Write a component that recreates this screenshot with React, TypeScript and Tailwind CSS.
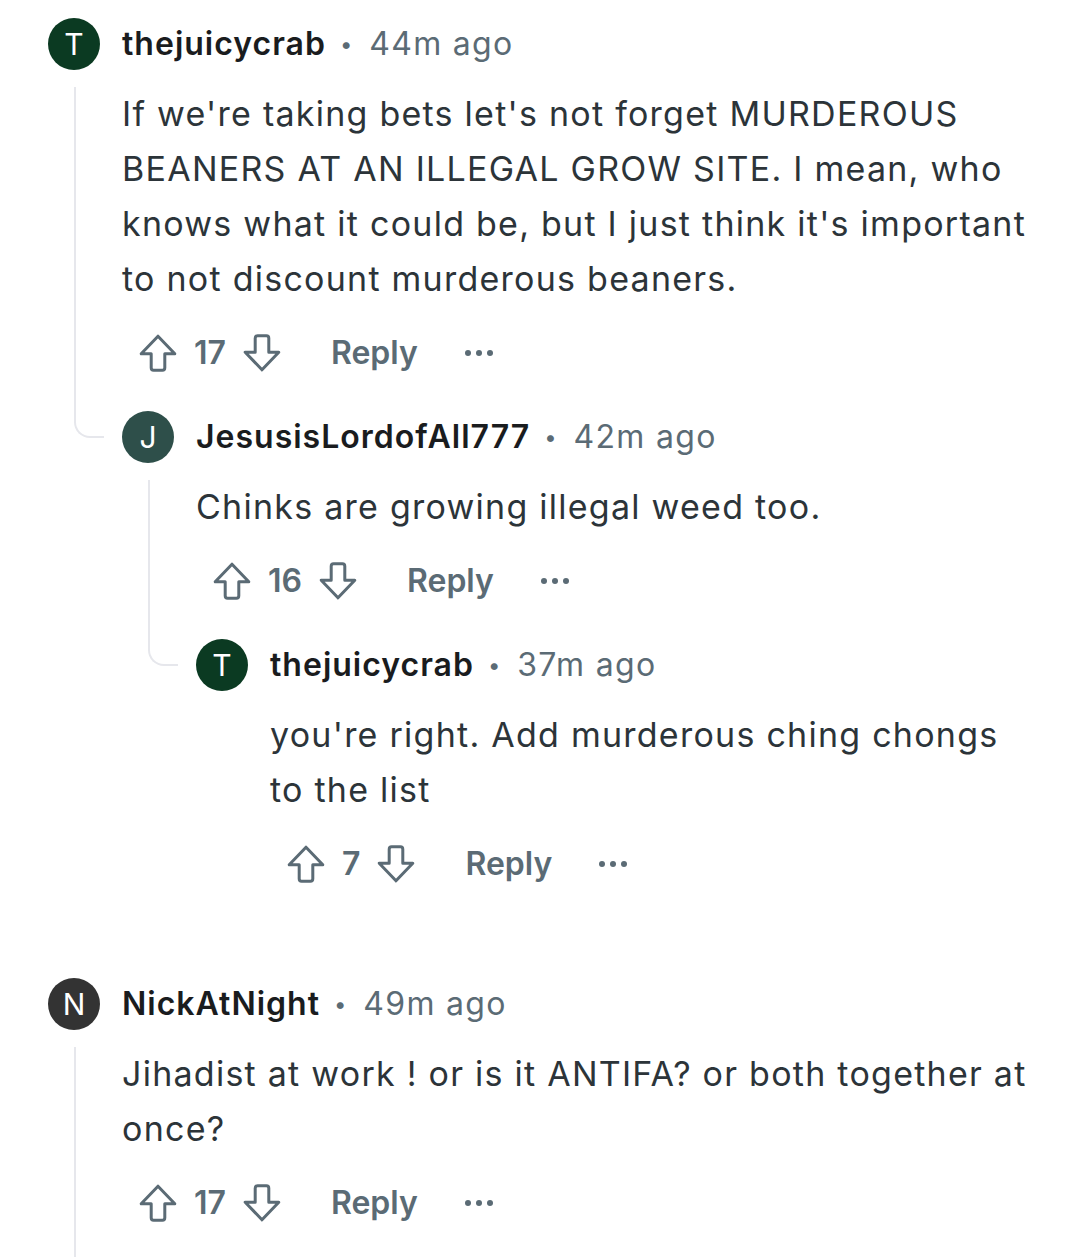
type Comment = {
  author: string;
  initial: string;
  avatar: string;
  time: string;
  body: string;
  votes: number;
  children?: Comment[];
  trailing?: boolean;
};

const thread: Comment[] = [
  {
    author: "thejuicycrab",
    initial: "T",
    avatar: "bg-[#0b3a22]",
    time: "44m ago",
    body:
      "If we're taking bets let's not forget MURDEROUS BEANERS AT AN ILLEGAL GROW SITE. I mean, who knows what it could be, but I just think it's important to not discount murderous beaners.",
    votes: 17,
    children: [
      {
        author: "JesusisLordofAll777",
        initial: "J",
        avatar: "bg-[#2e4f4a]",
        time: "42m ago",
        body: "Chinks are growing illegal weed too.",
        votes: 16,
        children: [
          {
            author: "thejuicycrab",
            initial: "T",
            avatar: "bg-[#0b3a22]",
            time: "37m ago",
            body: "you're right. Add murderous ching chongs to the list",
            votes: 7,
          },
        ],
      },
    ],
  },
  {
    author: "NickAtNight",
    initial: "N",
    avatar: "bg-[#333333]",
    time: "49m ago",
    body: "Jihadist at work ! or is it ANTIFA? or both together at once?",
    votes: 17,
    trailing: true,
  },
];

function UpArrow() {
  return (
    <svg width="40" height="40" viewBox="0 0 20 20" fill="none" stroke="#5b6b75" strokeWidth="1.5" strokeLinejoin="round">
      <path d="M10 1.6 L1.6 10.4 H6.6 V17.4 Q6.6 18.6 7.8 18.6 H12.2 Q13.4 18.6 13.4 17.4 V10.4 H18.4 Z" />
    </svg>
  );
}

function DownArrow() {
  return (
    <svg width="40" height="40" viewBox="0 0 20 20" fill="none" stroke="#5b6b75" strokeWidth="1.5" strokeLinejoin="round">
      <path d="M10 18.4 L1.6 9.6 H6.6 V2.6 Q6.6 1.4 7.8 1.4 H12.2 Q13.4 1.4 13.4 2.6 V9.6 H18.4 Z" />
    </svg>
  );
}

function MoreDots() {
  return (
    <svg width="30" height="8" viewBox="0 0 30 8" fill="#5b6b75">
      <circle cx="4" cy="4" r="3" />
      <circle cx="15" cy="4" r="3" />
      <circle cx="26" cy="4" r="3" />
    </svg>
  );
}

function CommentItem({ c }: { c: Comment }) {
  const hasKids = !!c.children && c.children.length > 0;
  return (
    <div>
      {/* Header */}
      <div className="flex items-center h-[52px]">
        <div
          className={`w-[52px] h-[52px] rounded-full ${c.avatar} flex items-center justify-center text-white text-[30px] shrink-0`}
        >
          {c.initial}
        </div>
        <span className="ml-[22px] font-semibold text-[32px] text-[#1a1c1e] tracking-[1px]">{c.author}</span>
        <span className="ml-[14px] mr-[17px] text-[#5b6b75] text-[22px]">•</span>
        <span className="text-[32px] text-[#5b6b75] tracking-[1.3px]">{c.time}</span>
      </div>

      {/* Body with thread line */}
      <div className="flex">
        <div className="w-[74px] shrink-0 flex flex-col">
          {(hasKids || c.trailing) && <div className="ml-[26px] mt-[17px] w-[2px] flex-1 bg-[#e6e7ec]" />}
        </div>
        <div className={`flex-1 pr-[48px] ${hasKids ? "pb-[38px]" : c.trailing ? "pb-[60px]" : ""}`}>
          <p className="mt-4 text-[34px] leading-[55px] tracking-[1.25px] text-[#2c3439]">{c.body}</p>
          <div className="mt-[27px] flex items-center h-[40px] pl-4 text-[#5b6b75]">
            <UpArrow />
            <span className="ml-4 text-[32px] font-semibold">{c.votes}</span>
            <span className="ml-4">
              <DownArrow />
            </span>
            <span className="ml-[49px] text-[32px] font-semibold">Reply</span>
            <span className="ml-[46px]">
              <MoreDots />
            </span>
          </div>
        </div>
      </div>

      {/* Children */}
      {c.children?.map((k, i) => (
        <div key={i} className="flex">
          <div className="w-[74px] shrink-0">
            <div className="ml-[26px] h-[27px] w-[30px] border-l-2 border-b-2 border-[#e6e7ec] rounded-bl-[16px]" />
          </div>
          <div className="flex-1 min-w-0">
            <CommentItem c={k} />
          </div>
        </div>
      ))}
    </div>
  );
}

export default function App() {
  return (
    <div
      className="w-[1080px] h-[1257px] overflow-hidden bg-white pt-[18px] pl-[48px]"
      style={{ fontFamily: "Inter, 'Noto Sans', sans-serif" }}
    >
      <div className="flex flex-col gap-[94px]">
        {thread.map((c, i) => (
          <CommentItem key={i} c={c} />
        ))}
      </div>
    </div>
  );
}
